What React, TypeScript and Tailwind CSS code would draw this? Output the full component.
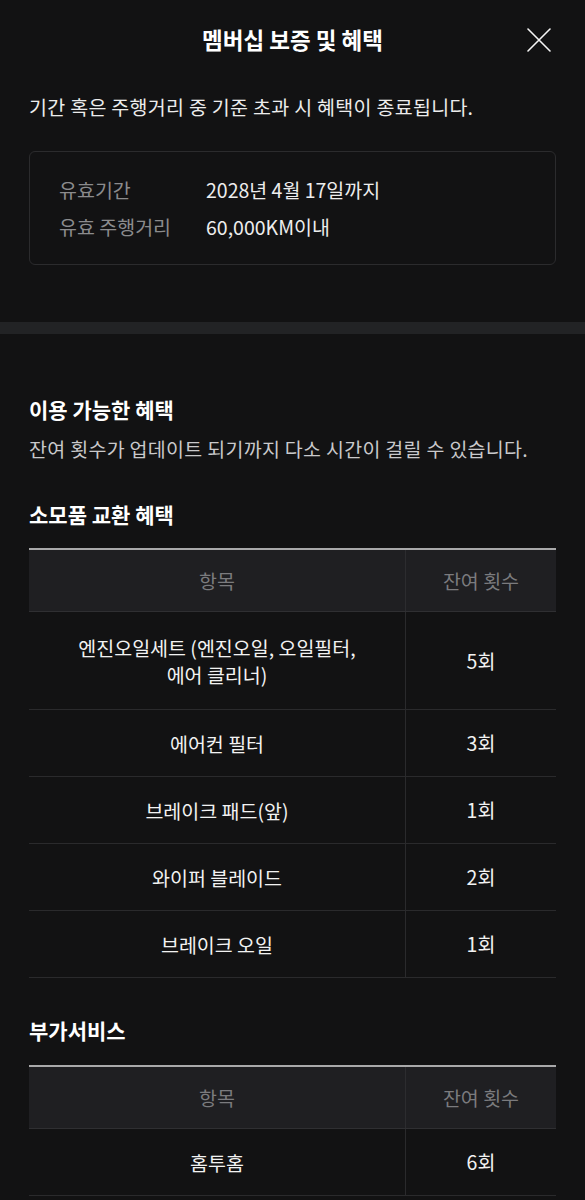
import * as React from 'react'

type Row = { name: React.ReactNode; count: string; tall?: boolean }

const consumables: Row[] = [
  {
    name: (
      <>
        엔진오일세트 (엔진오일, 오일필터,
        <br />
        에어 클리너)
      </>
    ),
    count: '5회',
    tall: true,
  },
  { name: '에어컨 필터', count: '3회' },
  { name: '브레이크 패드(앞)', count: '1회' },
  { name: '와이퍼 블레이드', count: '2회' },
  { name: '브레이크 오일', count: '1회' },
]

const extras: Row[] = [{ name: '홈투홈', count: '6회' }]

function BenefitTable({ rows }: { rows: Row[] }) {
  return (
    <div className="border-t-2 border-[#a9a9aa]">
      {/* header */}
      <div className="grid grid-cols-[376px_1fr] h-[62px] bg-[#1f1f22] border-b border-[#2f2f32] text-[19.5px] text-[#7b7b7e]">
        <div className="flex items-center justify-center">항목</div>
        <div className="flex items-center justify-center border-l border-[#2c2c2f]">잔여 횟수</div>
      </div>
      {rows.map((row, i) => (
        <div
          key={i}
          className={`grid grid-cols-[376px_1fr] border-b border-[#2a2a2c] text-[19.5px] text-[#f2f2f2] ${row.tall ? 'h-[98px]' : 'h-[67px]'}`}
        >
          <div className="flex items-center justify-center text-center leading-[27px]">{row.name}</div>
          <div className="flex items-center justify-center border-l border-[#2a2a2c]">{row.count}</div>
        </div>
      ))}
    </div>
  )
}

export default function App() {
  return (
    <div className="min-h-[1200px] bg-[#121213] font-['Noto_Sans_CJK_KR',sans-serif] text-white">
      {/* title bar */}
      <div className="relative h-[80px] flex items-center justify-center">
        <h1 className="text-[22.5px] font-bold">멤버십 보증 및 혜택</h1>
        <button className="absolute right-[34px] top-[28px] w-6 h-6" aria-label="닫기">
          <svg viewBox="0 0 24 24" width="24" height="24" fill="none" stroke="#f5f5f5" strokeWidth="1.6" strokeLinecap="round">
            <path d="M1 1L23 23M23 1L1 23" />
          </svg>
        </button>
      </div>

      <div className="px-[29px]">
        <p className="mt-[14px] text-[19.5px] leading-[26px] tracking-[0.3px] text-[#ececec]">
          기간 혹은 주행거리 중 기준 초과 시 혜택이 종료됩니다.
        </p>

        <div className="mt-[31px] rounded-md border border-[#2b2b2d] px-[29px] py-[19px] text-[19.5px] leading-[37px]">
          <div className="flex">
            <span className="w-[147px] text-[#8b8b8d]">유효기간</span>
            <span className="text-[#ededed]">2028년 4월 17일까지</span>
          </div>
          <div className="flex">
            <span className="w-[147px] text-[#8b8b8d]">유효 주행거리</span>
            <span className="text-[#ededed]">60,000KM이내</span>
          </div>
        </div>
      </div>

      <div className="mt-[57px] h-[12px] bg-[#222325]" />

      <div className="px-[29px] pb-10">
        <h2 className="mt-[61px] text-[21px] font-bold leading-[28px]">이용 가능한 혜택</h2>
        <p className="mt-[13px] text-[19.5px] leading-[26px] tracking-[0.3px] text-[#c9c9cb]">
          잔여 횟수가 업데이트 되기까지 다소 시간이 걸릴 수 있습니다.
        </p>

        <h3 className="mt-[38px] text-[21px] font-bold leading-[28px]">소모품 교환 혜택</h3>
        <div className="mt-[20px]">
          <BenefitTable rows={consumables} />
        </div>

        <h3 className="mt-[38px] text-[21px] font-bold leading-[28px]">부가서비스</h3>
        <div className="mt-[21px]">
          <BenefitTable rows={extras} />
        </div>
      </div>
    </div>
  )
}
